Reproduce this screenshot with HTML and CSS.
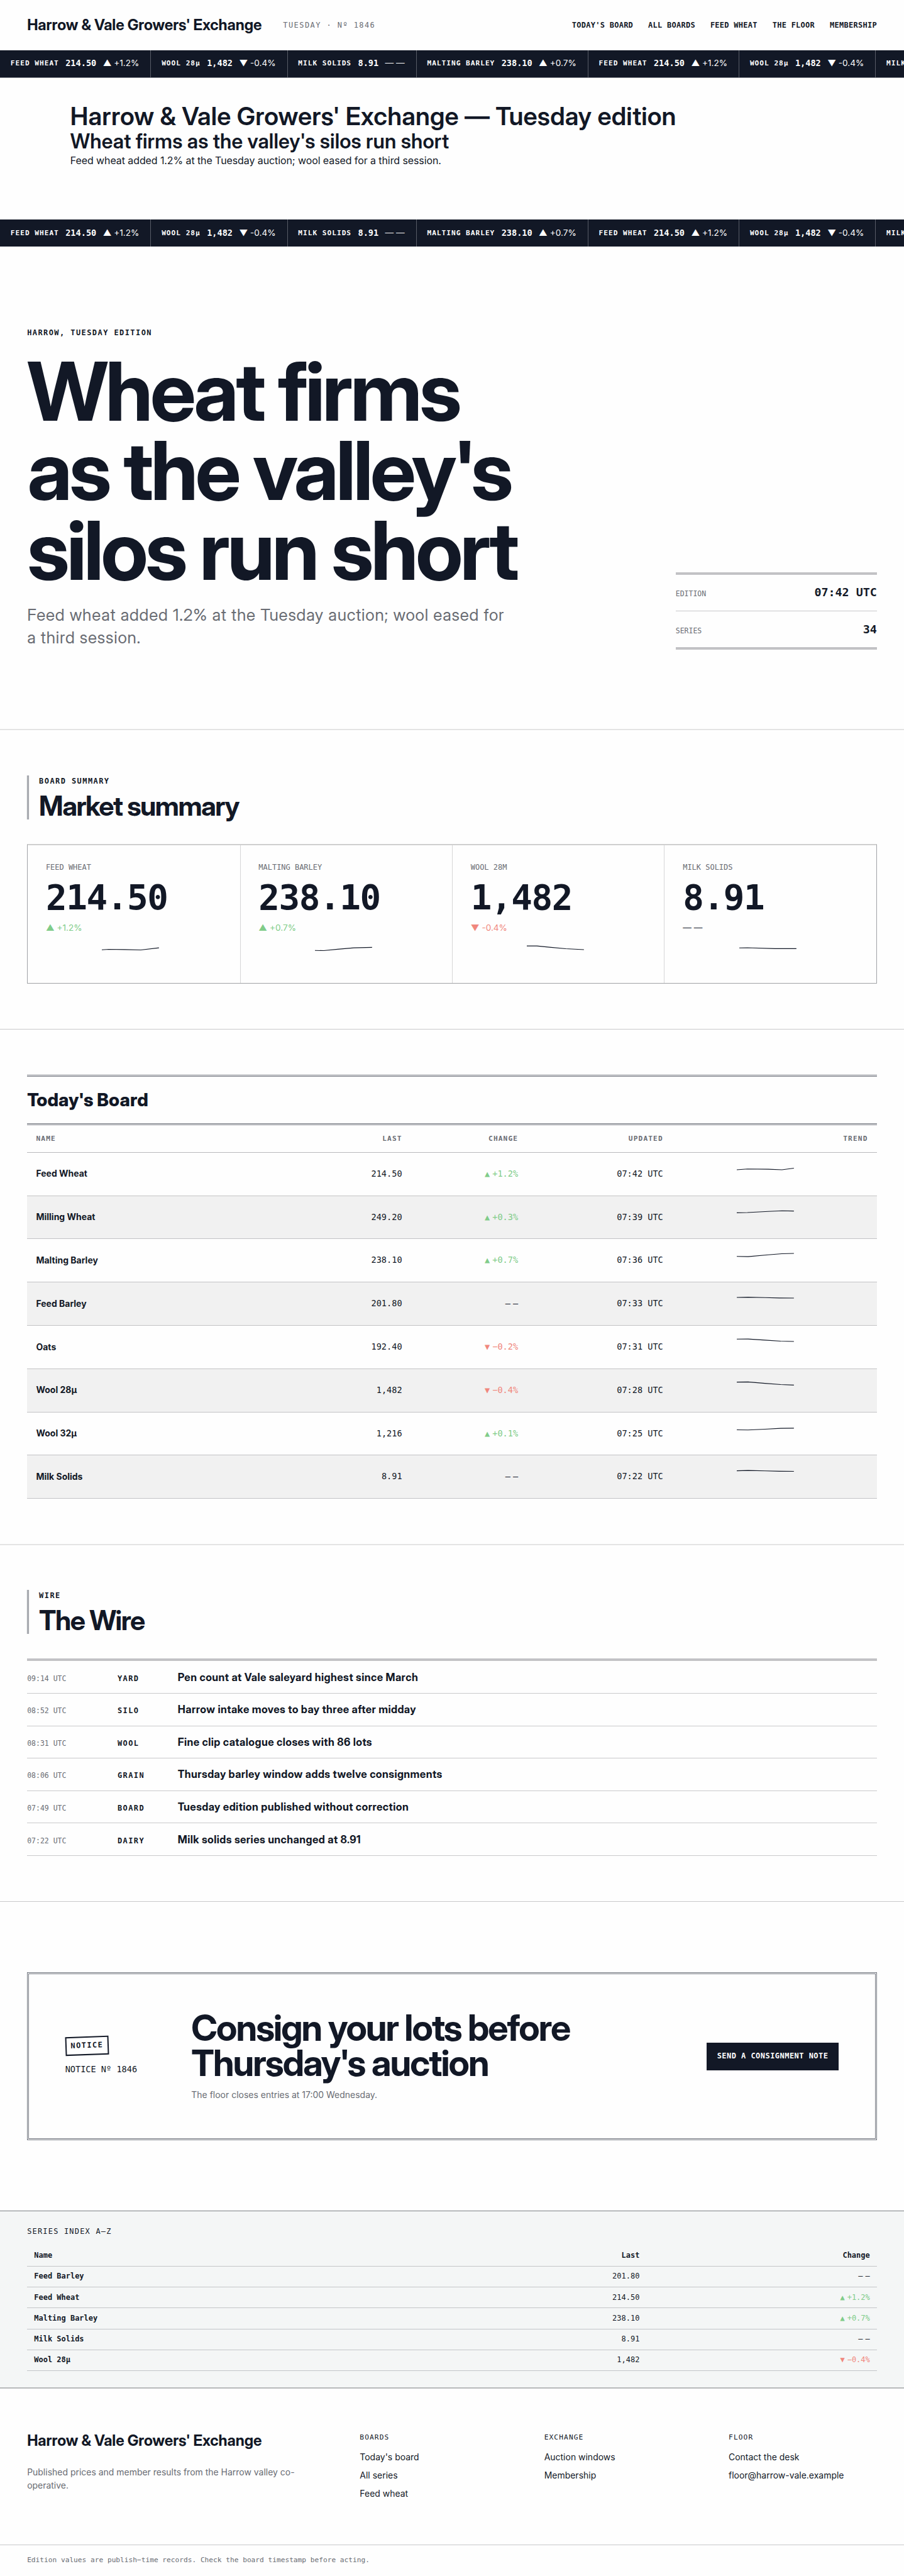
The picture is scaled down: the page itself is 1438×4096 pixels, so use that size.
FILE: index.html
```html
<!DOCTYPE html>
<html lang="en">
<head>
<meta charset="utf-8">
<title>Harrow &amp; Vale Growers' Exchange</title>
<link rel="stylesheet" href="styles.css">
</head>
<body>
<header class="masthead">
  <div class="brand-row">
    <span class="brand">Harrow &amp; Vale Growers' Exchange</span>
    <span class="issue">TUESDAY · Nº 1846</span>
  </div>
  <nav class="nav">
    <a>TODAY'S BOARD</a><a>ALL BOARDS</a><a>FEED WHEAT</a><a>THE FLOOR</a><a>MEMBERSHIP</a>
  </nav>
</header>

<div class="ticker ticker-ruled">
  <div class="tick"><span class="tick-name">FEED WHEAT</span><b>214.50</b><span class="chg"><i>▲</i><span>+1.2%</span></span></div>
  <div class="tick"><span class="tick-name">WOOL 28µ</span><b>1,482</b><span class="chg"><i>▼</i><span>-0.4%</span></span></div>
  <div class="tick"><span class="tick-name">MILK SOLIDS</span><b>8.91</b><span class="chg"><i>—</i><span>—</span></span></div>
  <div class="tick"><span class="tick-name">MALTING BARLEY</span><b>238.10</b><span class="chg"><i>▲</i><span>+0.7%</span></span></div>
  <div class="tick"><span class="tick-name">FEED WHEAT</span><b>214.50</b><span class="chg"><i>▲</i><span>+1.2%</span></span></div>
  <div class="tick"><span class="tick-name">WOOL 28µ</span><b>1,482</b><span class="chg"><i>▼</i><span>-0.4%</span></span></div>
  <div class="tick"><span class="tick-name">MILK SOLIDS</span><b>8.91</b><span class="chg"><i>—</i><span>—</span></span></div>
</div>

<section class="intro">
  <h1 class="intro-title">Harrow &amp; Vale Growers' Exchange — Tuesday edition</h1>
  <h2 class="intro-sub">Wheat firms as the valley's silos run short</h2>
  <p class="intro-text">Feed wheat added 1.2% at the Tuesday auction; wool eased for a third session.</p>
</section>

<div class="ticker">
  <div class="tick"><span class="tick-name">FEED WHEAT</span><b>214.50</b><span class="chg"><i>▲</i><span>+1.2%</span></span></div>
  <div class="tick"><span class="tick-name">WOOL 28µ</span><b>1,482</b><span class="chg"><i>▼</i><span>-0.4%</span></span></div>
  <div class="tick"><span class="tick-name">MILK SOLIDS</span><b>8.91</b><span class="chg"><i>—</i><span>—</span></span></div>
  <div class="tick"><span class="tick-name">MALTING BARLEY</span><b>238.10</b><span class="chg"><i>▲</i><span>+0.7%</span></span></div>
  <div class="tick"><span class="tick-name">FEED WHEAT</span><b>214.50</b><span class="chg"><i>▲</i><span>+1.2%</span></span></div>
  <div class="tick"><span class="tick-name">WOOL 28µ</span><b>1,482</b><span class="chg"><i>▼</i><span>-0.4%</span></span></div>
  <div class="tick"><span class="tick-name">MILK SOLIDS</span><b>8.91</b><span class="chg"><i>—</i><span>—</span></span></div>
</div>

<section class="hero">
  <div class="hero-copy">
    <p class="eyebrow">HARROW, TUESDAY EDITION</p>
    <h2 class="hero-title">Wheat firms<br>as the valley's<br>silos run short</h2>
    <p class="hero-deck">Feed wheat added 1.2% at the Tuesday auction; wool eased for a third session.</p>
  </div>
  <dl class="meta">
    <div class="meta-row"><dt>EDITION</dt><dd>07:42 UTC</dd></div>
    <div class="meta-row"><dt>SERIES</dt><dd>34</dd></div>
  </dl>
</section>

<section class="summary">
  <div class="head"><p class="eyebrow">BOARD SUMMARY</p><h2>Market summary</h2></div>
  <div class="cards">
    <div class="card">
      <p class="card-name">FEED WHEAT</p><p class="card-value">214.50</p>
      <p class="chg up"><i>▲</i><span>+1.2%</span></p>
      <svg class="spark" width="91" height="40" viewBox="0 0 91 40"><path d="M0 23.3L11 22.5L36 22.9L62 23.6L91 20.2"/></svg>
    </div>
    <div class="card">
      <p class="card-name">MALTING BARLEY</p><p class="card-value">238.10</p>
      <p class="chg up"><i>▲</i><span>+0.7%</span></p>
      <svg class="spark" width="91" height="40" viewBox="0 0 91 40"><path d="M0 24.3L14 24.6L36 22.4L62 20.2L91 19.4"/></svg>
    </div>
    <div class="card">
      <p class="card-name">WOOL 28M</p><p class="card-value">1,482</p>
      <p class="chg down"><i>▼</i><span>-0.4%</span></p>
      <svg class="spark" width="91" height="40" viewBox="0 0 91 40"><path d="M0 17.2L16 17.2L36 19.2L62 21.6L91 23"/></svg>
    </div>
    <div class="card">
      <p class="card-name">MILK SOLIDS</p><p class="card-value">8.91</p>
      <p class="chg"><i>—</i><span>—</span></p>
      <svg class="spark" width="91" height="40" viewBox="0 0 91 40"><path d="M0 20.3L13 20.1L57 21.4L91 21.4"/></svg>
    </div>
  </div>
</section>

<section class="board">
  <h2 class="board-title">Today's Board</h2>
  <table class="board-table">
    <thead><tr><th>NAME</th><th>LAST</th><th>CHANGE</th><th>UPDATED</th><th>TREND</th></tr></thead>
    <tbody>
    <tr><th>Feed Wheat</th><td>214.50</td><td class="chg up"><i>▲</i><span>+1.2%</span></td><td>07:42 UTC</td><td class="trend"><svg class="spark" width="91" height="46" viewBox="0 0 91 46"><path d="M0 27L17 25.8L50 26.2L72 27L91 24.6"/></svg></td></tr>
    <tr><th>Milling Wheat</th><td>249.20</td><td class="chg up"><i>▲</i><span>+0.3%</span></td><td>07:39 UTC</td><td class="trend"><svg class="spark" width="91" height="46" viewBox="0 0 91 46"><path d="M0 26.4L17 26L50 24.3L72 23.3L91 23.7"/></svg></td></tr>
    <tr><th>Malting Barley</th><td>238.10</td><td class="chg up"><i>▲</i><span>+0.7%</span></td><td>07:36 UTC</td><td class="trend"><svg class="spark" width="91" height="46" viewBox="0 0 91 46"><path d="M0 27.8L18 28.2L50 25.3L72 23.6L91 23.1"/></svg></td></tr>
    <tr><th>Feed Barley</th><td>201.80</td><td class="chg"><i>—</i><span>—</span></td><td>07:33 UTC</td><td class="trend"><svg class="spark" width="91" height="46" viewBox="0 0 91 46"><path d="M0 24L18 23.7L45 24.3L68 24.9L91 25"/></svg></td></tr>
    <tr><th>Oats</th><td>192.40</td><td class="chg down"><i>▼</i><span>−0.2%</span></td><td>07:31 UTC</td><td class="trend"><svg class="spark" width="91" height="46" viewBox="0 0 91 46"><path d="M0 21.3L18 21.2L45 22.9L70 24.5L91 25"/></svg></td></tr>
    <tr><th>Wool 28µ</th><td>1,482</td><td class="chg down"><i>▼</i><span>−0.4%</span></td><td>07:28 UTC</td><td class="trend"><svg class="spark" width="91" height="46" viewBox="0 0 91 46"><path d="M0 20.7L18 20.4L45 22.7L70 24.6L91 25.4"/></svg></td></tr>
    <tr><th>Wool 32µ</th><td>1,216</td><td class="chg up"><i>▲</i><span>+0.1%</span></td><td>07:25 UTC</td><td class="trend"><svg class="spark" width="91" height="46" viewBox="0 0 91 46"><path d="M0 27.5L18 27.8L45 26.5L70 25.2L91 24.9"/></svg></td></tr>
    <tr><th>Milk Solids</th><td>8.91</td><td class="chg"><i>—</i><span>—</span></td><td>07:22 UTC</td><td class="trend"><svg class="spark" width="91" height="46" viewBox="0 0 91 46"><path d="M0 24.7L18 24.2L45 24.8L68 25.4L91 25.5"/></svg></td></tr>
    </tbody>
  </table>
</section>

<section class="wire">
  <div class="head"><p class="eyebrow">WIRE</p><h2>The Wire</h2></div>
  <ul class="wire-list">
    <li><time>09:14 UTC</time><span class="tag">YARD</span><h3>Pen count at Vale saleyard highest since March</h3></li>
    <li><time>08:52 UTC</time><span class="tag">SILO</span><h3>Harrow intake moves to bay three after midday</h3></li>
    <li><time>08:31 UTC</time><span class="tag">WOOL</span><h3>Fine clip catalogue closes with 86 lots</h3></li>
    <li><time>08:06 UTC</time><span class="tag">GRAIN</span><h3>Thursday barley window adds twelve consignments</h3></li>
    <li><time>07:49 UTC</time><span class="tag">BOARD</span><h3>Tuesday edition published without correction</h3></li>
    <li><time>07:22 UTC</time><span class="tag">DAIRY</span><h3>Milk solids series unchanged at 8.91</h3></li>
  </ul>
</section>

<section class="notice">
  <div class="notice-box">
    <div class="notice-id"><span class="stamp">NOTICE</span><span class="notice-no">NOTICE Nº 1846</span></div>
    <div class="notice-copy">
      <h2>Consign your lots before<br>Thursday's auction</h2>
      <p>The floor closes entries at 17:00 Wednesday.</p>
    </div>
    <a class="button">SEND A CONSIGNMENT NOTE</a>
  </div>
</section>

<section class="index">
  <p class="index-title">SERIES INDEX A–Z</p>
  <table class="index-table">
    <thead><tr><th>Name</th><th>Last</th><th>Change</th></tr></thead>
    <tbody>
    <tr><th>Feed Barley</th><td>201.80</td><td class="chg"><i>—</i><span>—</span></td></tr>
    <tr><th>Feed Wheat</th><td>214.50</td><td class="chg up"><i>▲</i><span>+1.2%</span></td></tr>
    <tr><th>Malting Barley</th><td>238.10</td><td class="chg up"><i>▲</i><span>+0.7%</span></td></tr>
    <tr><th>Milk Solids</th><td>8.91</td><td class="chg"><i>—</i><span>—</span></td></tr>
    <tr><th>Wool 28µ</th><td>1,482</td><td class="chg down"><i>▼</i><span>−0.4%</span></td></tr>
    </tbody>
  </table>
</section>

<footer class="footer">
  <div class="footer-grid">
    <div><p class="brand">Harrow &amp; Vale Growers' Exchange</p><p class="about">Published prices and member results from the Harrow valley co-operative.</p></div>
    <div class="links"><h4>BOARDS</h4><a>Today's board</a><a>All series</a><a>Feed wheat</a></div>
    <div class="links"><h4>EXCHANGE</h4><a>Auction windows</a><a>Membership</a></div>
    <div class="links"><h4>FLOOR</h4><a>Contact the desk</a><a>floor@harrow-vale.example</a></div>
  </div>
  <p class="fine">Edition values are publish−time records. Check the board timestamp before acting.</p>
</footer>
</body>
</html>
```
FILE: styles.css
```css
:root {
  --ink: #121826;
  --muted: #696c73;
  --rule: #c9c9cb;
  --rule-soft: #e4e4e4;
  --rule-heavy: #c2c2c5;
  --up: #80cc89;
  --down: #f0877d;
  --mono: "DejaVu Sans Mono", monospace;
  --display: "Inter Display", Inter, sans-serif;
  --gutter: 43.2px;
}
* { box-sizing: border-box; }
body {
  margin: 0;
  zoom: 0.9986;
  background: #fefefe;
  color: var(--ink);
  font: 400 16px/1.6 Inter, sans-serif;
  overflow-x: hidden;
}
h1, h2, h3, h4, p, dl, dd, ul { margin: 0; padding: 0; }
h1, h2, h3 { font-family: var(--display); }
i { font-style: normal; }

.eyebrow { font: 700 12px/19.2px var(--mono); letter-spacing: .12em; }
.chg { display: flex; gap: 4px; font-size: 13.6px; line-height: 21.76px; }
.up { color: var(--up); }
.down { color: var(--down); }
.spark { display: block; fill: none; stroke: var(--ink); stroke-width: 1.1; overflow: visible; }
.brand { font-family: var(--display); font-size: 24px; font-weight: 700; line-height: 28.8px; letter-spacing: -.002em; white-space: nowrap; }

/* Masthead */
.masthead { display: flex; justify-content: space-between; align-items: center; height: 80px; padding: 1px var(--gutter) 0; }
.brand-row { display: flex; align-items: center; gap: 34px; }
.issue { font: 12px/19.2px var(--mono); letter-spacing: .12em; color: var(--muted); }
.nav { display: flex; gap: 24px; font: 700 12px/19.2px var(--mono); letter-spacing: .28px; }

/* Ticker */
.ticker { display: flex; height: 43px; overflow: hidden; background: var(--ink); color: #fff; }
.ticker-ruled { height: 44px; border-bottom: 1px solid #888b92; }
.tick { display: flex; flex: none; align-items: center; gap: 10.4px; padding: 0 18px 0 16.8px; border-right: 1px solid #585c67; }
.tick-name { font: 700 11.2px/18px var(--mono); letter-spacing: .98px; }
.tick b { font: 700 13.6px/21.76px var(--mono); }

/* Intro */
.intro { height: 226px; padding: 39.5px 112px 0; }
.intro-title { font-size: 40px; font-weight: 600; line-height: 1.1; letter-spacing: .004em; }
.intro-sub { font-size: 32px; font-weight: 600; line-height: 1.1; letter-spacing: .004em; }
.intro-text { padding-top: 1px; letter-spacing: -.005em; }

/* Hero */
.hero { display: flex; justify-content: space-between; align-items: flex-end; height: 770px; padding: 0 var(--gutter) 127px; border-bottom: 2.01px solid var(--rule-soft); }
.hero-title { margin-top: 19.5px; font-size: 129.6px; font-weight: 700; line-height: .98; letter-spacing: -.0345em; white-space: nowrap; }
.hero-deck { width: 770px; margin-top: 21px; font-family: var(--display); font-size: 26.2px; line-height: 36.3px; letter-spacing: .03em; color: var(--muted); }
.meta { width: 320.6px; border-top: 4.01px solid var(--rule-heavy); border-bottom: 4.01px solid var(--rule-heavy); }
.meta-row { display: flex; justify-content: space-between; align-items: baseline; height: 57.5px; padding-top: 13.5px; }
.meta-row + .meta-row { border-top: 1px solid var(--rule); padding-top: 14px; }
.meta dt { font: 11.52px/18.4px var(--mono); color: var(--muted); }
.meta dd { font: 700 18.4px/29.4px var(--mono); }

/* Section heads */
.head { height: 70.4px; padding-left: 16px; border-left: 3.01px double #70747d; }
.head h2 { margin-top: 8px; font-size: 43.2px; font-weight: 700; line-height: 1; letter-spacing: -.035em; }

/* Market summary */
.summary { padding: 71.4px var(--gutter) 72.5px; border-bottom: 1px solid var(--rule); }
.cards { display: grid; grid-template-columns: repeat(4, 1fr); height: 221.7px; margin-top: 39.3px; border: 1px solid #a0a2a6; border-top: 2.01px solid #cfcfcf; }
.card { padding: 26.3px 28.8px 0; }
.card + .card { border-left: 1px solid #d6d6d7; }
.card-name { font: 12px/19.2px var(--mono); color: var(--muted); }
.card-value { margin: 9.5px 0 10px; font: 700 56px/56px var(--mono); letter-spacing: -.025em; }
.card .spark { margin-left: 89.5px; }

/* Board */
.board { padding: 71.7px var(--gutter) 72px; border-bottom: 2.01px solid var(--rule-soft); }
.board-title { height: 81px; border-top: 3.01px double #70747d; border-bottom: 3.01px double #70747d; font-size: 28.8px; font-weight: 800; line-height: 75px; letter-spacing: .004em; }
.board-table, .index-table { display: block; }
.board-table thead, .board-table tbody, .index-table thead, .index-table tbody { display: block; }
.board-table tr { display: grid; grid-template-columns: 435.7px 176px 184.8px 231px 1fr; align-items: center; height: 68.9px; border-bottom: 1px solid #c3c3c5; }
.board-table thead tr { height: 43.4px; border-bottom-color: #b9b9bb; }
.board-table tbody tr:nth-child(even) { background: #f1f1f1; }
.board-table th, .board-table td { padding: 0 14.4px; text-align: right; }
.board-table thead th { font: 700 11.2px/18px var(--mono); letter-spacing: .1em; color: var(--muted); }
.board-table td { font: 13.6px/21.76px var(--mono); }
.board-table .chg { justify-content: flex-end; }
.board-table tbody th { font-size: 14px; font-weight: 700; }
.board-table tr th:first-child { text-align: left; }
.board-table .trend { align-self: start; padding: 0 0 0 103.2px; }

/* Wire */
.wire { padding: 71px var(--gutter) 72px; border-bottom: 1px solid var(--rule); }
.wire-list { margin-top: 39.2px; list-style: none; border-top: 4.01px solid var(--rule-heavy); }
.wire-list li { display: grid; grid-template-columns: 144px 96px 1fr; align-items: baseline; height: 51.7px; padding-top: 12.2px; border-bottom: 1px solid var(--rule); }
.wire time { font: 11.52px/18.4px var(--mono); color: var(--muted); }
.tag { font: 700 12px/19.2px var(--mono); letter-spacing: .12em; }
.wire h3 { font-size: 16.8px; font-weight: 700; letter-spacing: .025em; }

/* Notice */
.notice { padding: 112px var(--gutter); }
.notice-box { display: grid; grid-template-columns: 201px 1fr auto; align-items: center; height: 268px; padding: 0 57.6px; border: 3.01px double #70747d; }
.notice-id { display: flex; flex-direction: column; align-items: flex-start; gap: 12.8px; }
.stamp { padding: 3.2px 6.4px; border: 2.01px solid var(--ink); font: 700 12px/19.2px var(--mono); letter-spacing: .12em; transform: rotate(-2deg); }
.notice-no { font: 13.6px/21.76px var(--mono); }
.notice-copy h2 { font-size: 57.6px; font-weight: 700; line-height: .98; letter-spacing: -.0345em; }
.notice-copy p { margin-top: 11.5px; font-size: 14px; line-height: 23px; color: var(--muted); }
.button { height: 44px; padding: 0 17px; background: var(--ink); color: #fff; font: 700 12px/44px var(--mono); letter-spacing: .04em; }

/* Series index */
.index { height: 283px; padding: 22.3px var(--gutter) 0; border-top: 1px solid #7c8186; border-bottom: 2.01px solid #b8babb; background: #f4f6f6; }
.index-title { margin-bottom: 12.7px; font: 12px/19.2px var(--mono); letter-spacing: .1em; }
.index-table { font: 12px/19.2px var(--mono); }
.index-table tr { display: grid; grid-template-columns: 650.1px 336.7px 1fr; align-items: center; height: 33.35px; border-bottom: 1px solid #c3c5c8; }
.index-table th, .index-table td { padding: 0 11.2px; text-align: right; }
.index-table tr th:first-child { text-align: left; }
.index-table .chg { justify-content: flex-end; font-size: 12px; line-height: 19.2px; }

/* Footer */
.footer-grid { display: grid; grid-template-columns: 2fr 1fr 1fr 1fr; gap: 57.6px; height: 249px; padding: 69px var(--gutter) 0; }
.about { margin-top: 26px; font-size: 14px; line-height: 21px; color: var(--muted); }
.links { display: flex; flex-direction: column; font-size: 14px; line-height: 29px; }
.links h4 { margin-bottom: 8px; font: 11.2px/18px var(--mono); letter-spacing: .1em; }
.fine { height: 50px; padding: 0 var(--gutter); border-top: 1px solid var(--rule); font: 11.2px/49px var(--mono); color: var(--muted); }
```
